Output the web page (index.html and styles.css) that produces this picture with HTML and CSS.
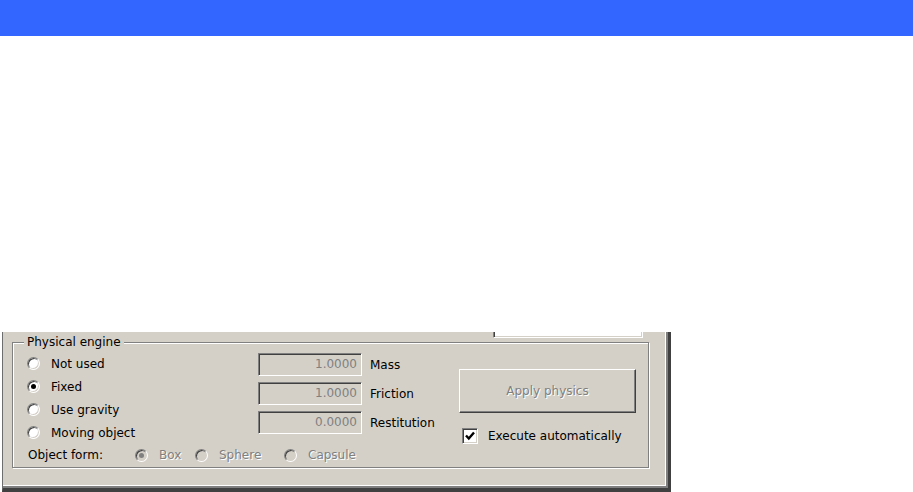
FILE: index.html
```html
<!DOCTYPE html>
<html lang="en">
<head>
  <meta charset="UTF-8">
  <title>Physical engine</title>
  <meta name="viewport" content="width=device-width, initial-scale=1.0">
  <link rel="stylesheet" href="styles.css">
</head>
<body>

  <header class="topbar"></header>

  <main class="stage">
    <div class="dialog">
      <div class="edit-stub"></div>

      <div class="group">
        <span class="group-title">Physical engine</span>

        <div class="group-body">
          <div class="modes">
            <label class="radio"><span class="dot"></span>Not used</label>
            <label class="radio on"><span class="dot"></span>Fixed</label>
            <label class="radio"><span class="dot"></span>Use gravity</label>
            <label class="radio"><span class="dot"></span>Moving object</label>
          </div>

          <div class="params">
            <div class="param"><span class="field">1.0000</span><span>Mass</span></div>
            <div class="param"><span class="field">1.0000</span><span>Friction</span></div>
            <div class="param"><span class="field">0.0000</span><span>Restitution</span></div>
          </div>

          <div class="actions">
            <button class="btn" disabled>Apply physics</button>
            <label class="check">
              <span class="box">
                <svg width="14" height="14" viewBox="0 0 14 14"><path d="M3 6.5 L5.8 9.5 L11 3.5" fill="none" stroke="#000" stroke-width="2.4"/></svg>
              </span>
              Execute automatically
            </label>
          </div>

          <div class="form-row">
            <span class="form-label">Object form:</span>
            <label class="radio off on opt-box"><span class="dot"></span>Box</label>
            <label class="radio off opt-sphere"><span class="dot"></span>Sphere</label>
            <label class="radio off"><span class="dot"></span>Capsule</label>
          </div>
        </div>
      </div>
    </div>
  </main>

</body>
</html>
```

FILE: styles.css
```css
* {
  box-sizing: border-box;
}

html, body {
  margin: 0;
  height: 100%;
  overflow: hidden;
}

body {
  background-color: #fff;
  color: #000;
  font-family: "DejaVu Sans", sans-serif;
  font-size: 12px;
}

.topbar {
  height: 36px;
  background-color: #3366ff;
}

.stage {
  padding-top: 296px;
}

/* classic window client area */
.dialog {
  margin-left: 2px;
  width: 669px;
  height: 160px;
  background-color: #d4d0c8;
  border-left: 1px solid #6d6d6d;
  border-right: 3px solid #404040;
  border-bottom: 4px solid #404040;
  box-shadow: inset -2px -2px 0 #808080, inset -3px -3px 0 #fff;
}

.edit-stub {
  margin-left: 490px;
  width: 150px;
  height: 6px;
  background-color: #fff;
  border-left: 1px solid #808080;
  border-right: 1px solid #fff;
  border-bottom: 1px solid #fff;
  box-shadow: inset 1px 0 0 #404040, inset -1px -1px 0 #d4d0c8;
}

.group {
  position: relative;
  margin: 4px 0 0 9px;
  width: 637px;
  height: 126px;
  border: 1px solid #808080;
  box-shadow: inset 1px 1px 0 #fff, 1px 1px 0 #fff;
}

.group-title {
  position: absolute;
  top: -8px;
  left: 11px;
  padding: 0 3px;
  line-height: 14px;
  background-color: #d4d0c8;
}

.group-body {
  display: grid;
  grid-template-columns: 231px 201px 1fr;
  grid-template-rows: 92px 22px;
  padding: 9px 0 0 14px;
}

.modes {
  display: flex;
  flex-direction: column;
}

.radio {
  display: flex;
  align-items: center;
  gap: 11px;
  height: 23px;
  white-space: nowrap;
}

.dot {
  position: relative;
  flex: none;
  width: 13px;
  height: 13px;
  border-radius: 50%;
  background-color: #fff;
  border: 1px solid;
  border-color: #808080 #fff #fff #808080;
  box-shadow: inset 1px 1px 0 #404040, inset -1px -1px 0 #d4d0c8;
}

.radio.on .dot::after {
  content: "";
  position: absolute;
  left: 3px;
  top: 3px;
  width: 5px;
  height: 5px;
  border-radius: 50%;
  background-color: #000;
}

.radio.off {
  color: #808080;
  text-shadow: 1px 1px 0 #fff;
}

.radio.off .dot {
  background-color: #d4d0c8;
}

.radio.off.on .dot::after {
  background-color: #808080;
}

.params {
  display: flex;
  flex-direction: column;
  gap: 6px;
  padding-top: 1px;
}

.param {
  display: flex;
  align-items: center;
  gap: 8px;
  height: 23px;
}

.field {
  width: 104px;
  height: 23px;
  padding-right: 4px;
  line-height: 21px;
  text-align: right;
  color: #808080;
  border: 1px solid;
  border-color: #808080 #fff #fff #808080;
  box-shadow: inset 1px 1px 0 #404040, inset -1px -1px 0 #d4d0c8;
}

.actions {
  display: flex;
  flex-direction: column;
  align-items: flex-start;
}

.btn {
  margin-top: 17px;
  width: 177px;
  height: 44px;
  padding: 0;
  font: inherit;
  color: #808080;
  text-shadow: 1px 1px 0 #fff;
  background-color: #d4d0c8;
  border: 1px solid;
  border-color: #fff #404040 #404040 #fff;
  box-shadow: inset -1px -1px 0 #808080;
}

.check {
  display: flex;
  align-items: center;
  gap: 10px;
  margin: 15px 0 0 3px;
  height: 16px;
}

.box {
  display: flex;
  width: 16px;
  height: 16px;
  background-color: #fff;
  border: 1px solid;
  border-color: #808080 #fff #fff #808080;
  box-shadow: inset 1px 1px 0 #404040, inset -1px -1px 0 #d4d0c8;
}

.form-row {
  grid-column: 1 / 3;
  display: flex;
  align-items: center;
}

.form-label {
  width: 108px;
  padding-left: 1px;
}

.opt-box {
  width: 60px;
}

.opt-sphere {
  width: 89px;
}
```
